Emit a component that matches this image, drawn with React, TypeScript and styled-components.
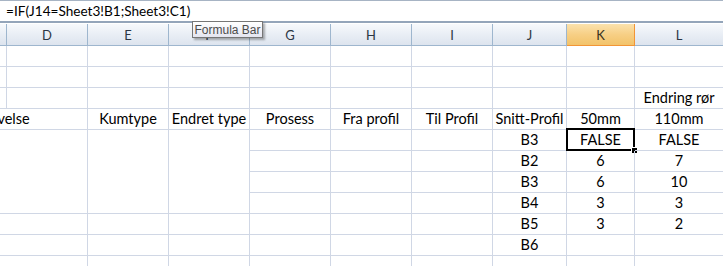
import React from 'react';
import styled, { createGlobalStyle, css } from 'styled-components';

const GlobalStyle = createGlobalStyle`
  html, body {
    margin: 0;
    padding: 0;
    background: #ffffff;
    overflow: hidden;
  }
`;

const CELL_FONT = `Lato, 'Liberation Sans', sans-serif`;

// Styled Components
const Window = styled.div`
  position: relative;
  width: 723px;
  height: 266px;
  overflow: hidden;
  background: #ffffff;
  font-family: ${CELL_FONT};
`;

const FormulaBar = styled.div`
  height: 20px;
  border-top: 1px solid #a7b4c4;
  border-bottom: 2px solid #94a5ba;
  display: flex;
  align-items: center;
  padding-left: 6px;
  font-size: 13.6px;
  color: #000000;
  white-space: nowrap;
`;

const Tooltip = styled.div`
  position: absolute;
  left: 192px;
  top: 21px;
  box-sizing: border-box;
  width: 71px;
  height: 17px;
  border: 1px solid #767676;
  background: linear-gradient(#ffffff, #e4e5f0);
  box-shadow: 2px 2px 2px rgba(0, 0, 0, 0.3);
  font-family: 'Liberation Sans', Arial, sans-serif;
  font-size: 12px;
  color: #4c4c4c;
  display: flex;
  align-items: center;
  justify-content: center;
  z-index: 5;
`;

const SheetViewport = styled.div`
  padding-top: 1px;
  overflow: hidden;
`;

// horizontal scroll position of the sheet: column C is mostly out of view
const Grid = styled.div<{ $cols: string }>`
  display: grid;
  grid-template-columns: ${p => p.$cols};
  grid-template-rows: 22px;
  grid-auto-rows: 21px;
  margin-left: -74px;
  width: max-content;
`;

const HeaderCell = styled.div<{ $active?: boolean }>`
  box-sizing: border-box;
  display: flex;
  align-items: center;
  justify-content: center;
  font-size: 13px;
  color: #2c3644;
  border-right: 1px solid #9eb6ce;
  border-bottom: 1px solid #9eb6ce;
  background: linear-gradient(#f7f9fc 0%, #e9eef5 50%, #dde4ee 100%);
  ${p => p.$active && css`
    background: linear-gradient(#fbe2ad 0%, #f7cf85 50%, #f2c36a 100%);
    border-right-color: #f29536;
    border-bottom-color: #f29536;
    color: #3a3220;
  `}
`;

const Cell = styled.div<{ $align?: 'left' | 'center'; $colSpan?: number; $rowSpan?: number }>`
  position: relative;
  box-sizing: border-box;
  border-right: 1px solid #d0d7e5;
  border-bottom: 1px solid #d0d7e5;
  display: flex;
  align-items: flex-end;
  justify-content: ${p => (p.$align === 'left' ? 'flex-start' : 'center')};
  padding: 0 3px 2px ${p => (p.$align === 'left' ? '4px' : '3px')};
  font-size: 14.5px;
  line-height: 17px;
  color: #000000;
  white-space: nowrap;
  grid-column: span ${p => p.$colSpan ?? 1};
  grid-row: span ${p => p.$rowSpan ?? 1};
`;

const Selection = styled.div`
  position: absolute;
  left: -1px;
  top: -2px;
  right: -1px;
  bottom: -1px;
  border: 2px solid #000000;
  pointer-events: none;
`;

const FillHandle = styled.div`
  position: absolute;
  right: -4px;
  bottom: -4px;
  width: 5px;
  height: 5px;
  background: #000000;
  border: 1px solid #ffffff;
  border-right: none;
  border-bottom: none;
`;

type CellData = {
  text?: string;
  align?: 'left' | 'center';
  colSpan?: number;
  rowSpan?: number;
  selected?: boolean;
};

const columns = [
  { key: 'C', width: 81 },
  { key: 'D', width: 81 },
  { key: 'E', width: 81 },
  { key: 'F', width: 81 },
  { key: 'G', width: 81 },
  { key: 'H', width: 81 },
  { key: 'I', width: 81 },
  { key: 'J', width: 74 },
  { key: 'K', width: 68 },
  { key: 'L', width: 89 },
  { key: 'M', width: 81 },
];

const empty = (n: number): CellData[] => Array.from({ length: n }, () => ({}));

// rows 11..21 of the sheet, merged blocks span the cells they cover
const rows: CellData[][] = [
  empty(11),
  empty(11),
  [...empty(9), { text: 'Endring rør' }, {}],
  [
    { text: 'Kumbeskrivelse', align: 'left', colSpan: 2 },
    { text: 'Kumtype' },
    { text: 'Endret type' },
    { text: 'Prosess' },
    { text: 'Fra profil' },
    { text: 'Til Profil' },
    { text: 'Snitt-Profil' },
    { text: '50mm' },
    { text: '110mm' },
    {},
  ],
  [
    { colSpan: 2, rowSpan: 4 },
    { rowSpan: 4 },
    { rowSpan: 4 },
    {}, {}, {},
    { text: 'B3' },
    { text: 'FALSE', selected: true },
    { text: 'FALSE' },
    {},
  ],
  [{}, {}, {}, { text: 'B2' }, { text: '6' }, { text: '7' }, {}],
  [{}, {}, {}, { text: 'B3' }, { text: '6' }, { text: '10' }, {}],
  [{}, {}, {}, { text: 'B4' }, { text: '3' }, { text: '3' }, {}],
  [{ colSpan: 2 }, {}, {}, {}, {}, {}, { text: 'B5' }, { text: '3' }, { text: '2' }, {}],
  [{ colSpan: 2 }, {}, {}, {}, {}, {}, { text: 'B6' }, {}, {}, {}],
  [{ colSpan: 2 }, ...empty(9)],
];

function App() {
  const template = columns.map(c => `${c.width}px`).join(' ');

  return (
    <Window>
      <GlobalStyle />
      <FormulaBar>=IF(J14=Sheet3!B1;Sheet3!C1)</FormulaBar>
      <Tooltip>Formula Bar</Tooltip>
      <SheetViewport>
        <Grid $cols={template}>
          {columns.map(c => (
            <HeaderCell key={c.key} $active={c.key === 'K'}>
              {c.key}
            </HeaderCell>
          ))}
          {rows.map((row, r) =>
            row.map((cell, i) => (
              <Cell
                key={`${r}-${i}`}
                $align={cell.align}
                $colSpan={cell.colSpan}
                $rowSpan={cell.rowSpan}
              >
                {cell.text}
                {cell.selected && (
                  <Selection>
                    <FillHandle />
                  </Selection>
                )}
              </Cell>
            ))
          )}
        </Grid>
      </SheetViewport>
    </Window>
  );
}

export default App;
